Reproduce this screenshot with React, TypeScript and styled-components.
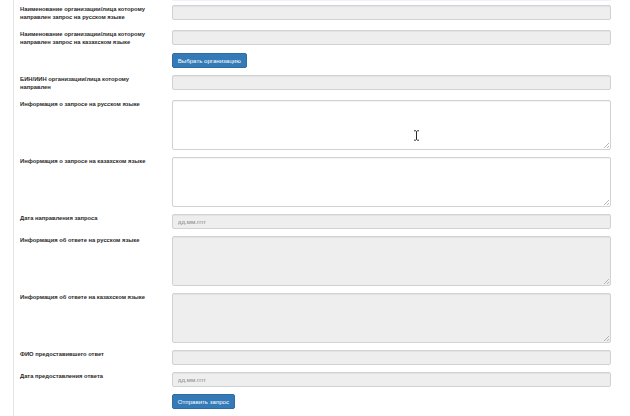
import React from "react";
import styled, { createGlobalStyle } from "styled-components";

const GlobalStyle = createGlobalStyle`
  html, body { margin: 0; padding: 0; background: #fff; }
  body { font-family: "Liberation Sans", Arial, sans-serif; color: #333; }
  * { box-sizing: border-box; }
`;

const Page = styled.div`
  margin-left: 13px;
  border-left: 1px solid #e3e3e3;
  min-height: 416px;
  padding-left: 6px;
  position: relative;
`;

const TopPeek = styled.div`
  margin-left: 151.5px;
  width: 439px;
  height: 1.2px;
  background: #edf2fb;
`;

const Form = styled.form`
  display: flex;
  flex-direction: column;
  gap: 7px;
  margin-top: 3.6px;
`;

const Row = styled.div`
  display: grid;
  grid-template-columns: 151.5px 439px;
  align-items: start;
`;

const Label = styled.label`
  font-size: 5.8px;
  line-height: 8px;
  font-weight: bold;
  color: #2a2a2a;
  padding-right: 15px;
  margin-bottom: 2.4px;
`;

const Control = styled.div`
  display: flex;
  flex-direction: column;
  align-items: stretch;
`;

const Input = styled.input<{ $disabled?: boolean }>`
  height: 15px;
  width: 100%;
  border: 1px solid #d2d2d2;
  border-radius: 2px;
  background: ${(p) => (p.$disabled ? "#eee" : "#fff")};
  box-shadow: inset 0 1px 1px rgba(0, 0, 0, 0.05);
  padding: 0 5.3px;
  font-family: "Liberation Sans", Arial, sans-serif;
  font-size: 6.2px;
  color: #555;
  outline: none;
  &::placeholder { color: #888; }
`;

const resizer = `linear-gradient(135deg, transparent 0 48%, #b5b5b5 48% 58%, transparent 58% 72%, #b5b5b5 72% 82%, transparent 82%) no-repeat right 1px bottom 1px / 5px 5px`;

const TextArea = styled.textarea<{ $disabled?: boolean }>`
  height: 50px;
  width: 100%;
  border: 1px solid #d2d2d2;
  border-radius: 2px;
  background: ${resizer}, ${(p) => (p.$disabled ? "#eee" : "#fff")};
  box-shadow: inset 0 1px 1px rgba(0, 0, 0, 0.05);
  resize: none;
  outline: none;
  padding: 2.6px 5.3px;
  font-family: "Liberation Sans", Arial, sans-serif;
  font-size: 6px;
  display: block;
`;

const Button = styled.button<{ $mt?: number }>`
  align-self: flex-start;
  margin-top: ${(p) => p.$mt ?? 0}px;
  height: 15px;
  padding: 0 5.3px;
  background: #337ab7;
  border: 1px solid #2e6da4;
  border-radius: 2px;
  color: #fff;
  font-family: "Liberation Sans", Arial, sans-serif;
  font-size: 6.1px;
  line-height: 13px;
  cursor: pointer;
  white-space: nowrap;
`;

const Cursor = styled.svg`
  position: absolute;
  left: 399px;
  top: 129.5px;
  width: 7px;
  height: 11px;
  pointer-events: none;
`;

function IBeam() {
  return (
    <Cursor viewBox="0 0 7 11">
      <path
        d="M1 0.8 H2.6 L3.5 1.6 L4.4 0.8 H6 M3.5 1.6 V9.4 M1 10.2 H2.6 L3.5 9.4 L4.4 10.2 H6 M2.4 5.5 H4.6"
        fill="none"
        stroke="#fff"
        strokeWidth="2"
        strokeLinecap="square"
      />
      <path
        d="M1 0.8 H2.6 L3.5 1.6 L4.4 0.8 H6 M3.5 1.6 V9.4 M1 10.2 H2.6 L3.5 9.4 L4.4 10.2 H6"
        fill="none"
        stroke="#111"
        strokeWidth="0.9"
      />
    </Cursor>
  );
}

export default function App() {
  return (
    <>
      <GlobalStyle />
      <Page>
        <TopPeek />
        <Form onSubmit={(e) => e.preventDefault()}>
          <Row>
            <Label>Наименование организации/лица которому направлен запрос на русском языке</Label>
            <Control>
              <Input $disabled readOnly />
            </Control>
          </Row>
          <Row>
            <Label>Наименование организации/лица которому направлен запрос на казахском языке</Label>
            <Control>
              <Input $disabled readOnly />
              <Button type="button" $mt={7.6}>Выбрать организацию</Button>
            </Control>
          </Row>
          <Row>
            <Label>БИН/ИИН организации/лица которому направлен</Label>
            <Control>
              <Input $disabled readOnly />
            </Control>
          </Row>
          <Row>
            <Label>Информация о запросе на русском языке</Label>
            <Control>
              <TextArea />
            </Control>
          </Row>
          <Row>
            <Label>Информация о запросе на казахском языке</Label>
            <Control>
              <TextArea />
            </Control>
          </Row>
          <Row>
            <Label>Дата направления запроса</Label>
            <Control>
              <Input $disabled readOnly placeholder="дд.мм.гггг" />
            </Control>
          </Row>
          <Row>
            <Label>Информация об ответе на русском языке</Label>
            <Control>
              <TextArea $disabled readOnly />
            </Control>
          </Row>
          <Row>
            <Label>Информация об ответе на казахском языке</Label>
            <Control>
              <TextArea $disabled readOnly />
            </Control>
          </Row>
          <Row>
            <Label>ФИО предоставившего ответ</Label>
            <Control>
              <Input $disabled readOnly />
            </Control>
          </Row>
          <Row>
            <Label>Дата предоставления ответа</Label>
            <Control>
              <Input $disabled readOnly placeholder="дд.мм.гггг" />
            </Control>
          </Row>
          <Row>
            <Label />
            <Control>
              <Button type="submit">Отправить запрос</Button>
            </Control>
          </Row>
        </Form>
        <IBeam />
      </Page>
    </>
  );
}
